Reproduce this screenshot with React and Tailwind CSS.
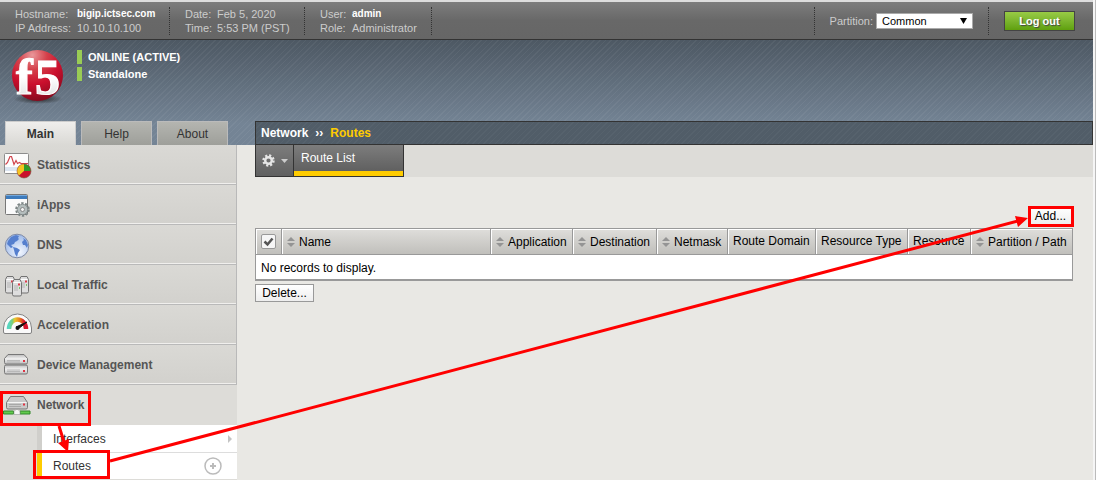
import clsx from 'clsx'

const hostInfo = [
  { width: 'w-[155px]', cols: 'grid-cols-[62px_auto]', rows: [['Hostname:', 'bigip.ictsec.com', true], ['IP Address:', '10.10.10.100']] },
  { width: 'w-[135px]', cols: 'grid-cols-[32px_auto]', rows: [['Date:', 'Feb 5, 2020'], ['Time:', '5:53 PM (PST)']] },
  { width: 'w-[127px]', cols: 'grid-cols-[32px_auto]', rows: [['User:', 'admin', true], ['Role:', 'Administrator']] },
]

const menu = [
  { label: 'Statistics', Icon: StatisticsIcon },
  { label: 'iApps', Icon: AppsIcon },
  { label: 'DNS', Icon: GlobeIcon },
  { label: 'Local Traffic', Icon: TrafficIcon },
  { label: 'Acceleration', Icon: GaugeIcon },
  { label: 'Device Management', Icon: DevicesIcon },
]

const columns = [
  { label: 'Name', sortable: true, width: 'w-[209px]' },
  { label: 'Application', sortable: true, width: 'w-[82px]' },
  { label: 'Destination', sortable: true, width: 'w-[84px]' },
  { label: 'Netmask', sortable: true, width: 'w-[71px]' },
  { label: 'Route Domain', width: 'w-[88px]' },
  { label: 'Resource Type', width: 'w-[92px]' },
  { label: 'Resource', width: 'w-[63px]' },
  { label: 'Partition / Path', sortable: true, width: 'w-[102px]' },
]

function Logo() {
  return (
    <svg width="56" height="60" viewBox="0 0 56 60" aria-label="F5" className="overflow-visible">
      <defs>
        <radialGradient id="ball" cx="0.4" cy="0.1" r="0.95">
          <stop offset="0" stopColor="#e9979a" />
          <stop offset="0.3" stopColor="#d5404a" />
          <stop offset="0.6" stopColor="#cb0f2d" />
          <stop offset="1" stopColor="#7d0a1c" />
        </radialGradient>
        <radialGradient id="ballShadow">
          <stop offset="0" stopColor="#222" stopOpacity="0.9" />
          <stop offset="1" stopColor="#222" stopOpacity="0" />
        </radialGradient>
        <linearGradient id="letters" x1="0" y1="0" x2="0" y2="1">
          <stop offset="0.5" stopColor="#fff" />
          <stop offset="1" stopColor="#d8d8d8" />
        </linearGradient>
      </defs>
      <ellipse cx="28" cy="50" rx="25" ry="5" fill="url(#ballShadow)" />
      <circle cx="27.500" cy="26.500" r="25.500" fill="url(#ball)" />
      <g fontFamily="Liberation Serif, serif" fontWeight="bold" fontSize="50" fill="url(#letters)" stroke="#fff" strokeWidth="1.200">
        <text x="6" y="45">f</text>
        <text x="25" y="45">5</text>
      </g>
    </svg>
  )
}

function StatisticsIcon() {
  return (
    <svg width="32" height="30" viewBox="0 0 32 30">
      <rect x="4.500" y="3.500" width="24" height="20" rx="1" fill="#fdfdfd" stroke="#8d8d8d" />
      <path d="M5 17h23v4H5z" fill="#dbe5f1" />
      <path d="M5.500 14.500l2-2 2.500-6h1.500l2.500 8 2-4 1.500 3 2-1 1.500 1h7" fill="none" stroke="#d0434c" strokeWidth="1.200" />
      <circle cx="24" cy="21" r="7" fill="#c9112b" stroke="#77553a" strokeWidth="0.600" />
      <path d="M24 21v-6.700a6.700 6.700 0 0 0-5 11.200z" fill="#f3c521" />
      <path d="M24 21v-6.700a6.700 6.700 0 0 1 6.700 6.700z" fill="#2f9b2b" />
    </svg>
  )
}

function AppsIcon() {
  return (
    <svg width="32" height="30" viewBox="0 0 32 30">
      <rect x="5.500" y="4.500" width="22" height="20" rx="1" fill="#fafafa" stroke="#777" />
      <path d="M6 5h21v4H6z" fill="#3c7bbd" />
      <path d="M6 5h21v1H6z" fill="#74a8db" />
      <circle cx="22.500" cy="19.500" r="6.300" fill="none" stroke="#7c8585" strokeWidth="2" strokeDasharray="2.400 1.550" />
      <circle cx="22.500" cy="19.500" r="5.200" fill="#b4bdbd" stroke="#7c8585" strokeWidth="0.800" />
      <circle cx="22.500" cy="19.500" r="2" fill="#f2f2f2" stroke="#777" strokeWidth="0.800" />
    </svg>
  )
}

function GlobeIcon() {
  return (
    <svg width="32" height="30" viewBox="0 0 32 30">
      <defs>
        <radialGradient id="sea" cx="0.6" cy="0.75" r="0.8">
          <stop offset="0" stopColor="#f3f7fe" />
          <stop offset="1" stopColor="#96b4e7" />
        </radialGradient>
      </defs>
      <circle cx="17" cy="16" r="11.800" fill="url(#sea)" stroke="#7f8aa5" />
      <path d="M8 11l3-4 5-2 3 1-1 2 1 1-2 2-2 1-1 2-3 1 2 2-2 1-3-3-1-1z" fill="#557fce" />
      <path d="M13 17l4 1 3 2-2 3-1 4-2-3-1-4z" fill="#557fce" />
      <path d="M23 8l3 2 2 5-1 3-2-3-2 0-1-3 2-2z" fill="#557fce" />
    </svg>
  )
}

function Tower({ x, y }) {
  return (
    <g transform={`translate(${x} ${y})`}>
      <path d="M0.500 3.500l1.500-3h6l1.500 3v12q0 1.500-1.500 1.500h-6q-1.500 0-1.500-1.500z" fill="#dedede" stroke="#737373" />
      <path d="M1.500 3.500h7" stroke="#fff" />
      <path d="M2 7h4M2 9h4M2 11h4" stroke="#aaa" strokeWidth="0.800" />
      <path d="M6 4.500h2v2H6z" fill="#dd3b48" />
      <path d="M7 8h1v2H7z" fill="#79c36a" />
    </g>
  )
}

function TrafficIcon() {
  return (
    <svg width="32" height="30" viewBox="0 0 32 30">
      <Tower x={5} y={6} />
      <Tower x={19} y={6} />
      <Tower x={12} y={9} />
    </svg>
  )
}

function GaugeIcon() {
  return (
    <svg width="32" height="30" viewBox="0 0 32 30">
      <defs>
        <linearGradient id="heat">
          <stop offset="0" stopColor="#58d5c0" />
          <stop offset="0.2" stopColor="#7bcf7a" />
          <stop offset="0.35" stopColor="#ecc72d" />
          <stop offset="0.65" stopColor="#e77a1d" />
          <stop offset="0.9" stopColor="#d5132d" />
        </linearGradient>
      </defs>
      <path d="M3.500 18a14 14 0 0 1 28 0v4q0 1.500-1.500 1.500H5q-1.500 0-1.500-1.500z" fill="#fafafa" stroke="#828282" />
      <path d="M9 19a8.500 9.500 0 0 1 17 0" fill="none" stroke="url(#heat)" strokeWidth="4.500" />
      <path d="M16 17l11-5-9 7z" fill="#111" stroke="#111" />
      <circle cx="17.500" cy="18" r="2" fill="#111" />
    </svg>
  )
}

function DevicesIcon() {
  return (
    <svg width="32" height="30" viewBox="0 0 32 30">
      <defs>
        <linearGradient id="metal" x1="0" y1="0" x2="0" y2="1">
          <stop offset="0" stopColor="#bbb" />
          <stop offset="0.45" stopColor="#f0f0f0" />
          <stop offset="1" stopColor="#bdbdbd" />
        </linearGradient>
      </defs>
      <path d="M4.500 8.500l3.500-4h16l3.500 4v4q0 1.500-1.500 1.500h-20q-1.500 0-1.500-1.500z" fill="url(#metal)" stroke="#777" />
      <path d="M4.500 16.500q0-1.500 1.500-1.500h20q1.500 0 1.500 1.500v6q0 1.500-1.500 1.500h-20q-1.500 0-1.500-1.500z" fill="url(#metal)" stroke="#777" />
      <path d="M7 10.500h13M7 12h13M7 20h13M7 21.500h13" stroke="#aaa" strokeWidth="0.700" />
      <path d="M23 10h2v2h-2zM23 20h2v2h-2z" fill="#df3343" />
    </svg>
  )
}

function NetworkIcon() {
  return (
    <svg width="32" height="30" viewBox="0 0 32 30">
      <path d="M6.500 12.500l4-6h13l4 6v5q0 1.500-1.500 1.500H8q-1.500 0-1.500-1.500z" fill="#c9c9c9" stroke="#777" />
      <path d="M7.500 12.500h19" stroke="#f5f5f5" />
      <path d="M9 14.500h12M9 16.500h12" stroke="#999" strokeWidth="0.700" />
      <path d="M23 13.500h2v2h-2z" fill="#df3343" />
      <path d="M3.500 21h10v3h-10zM20 21h10v3H20z" fill="#62cb4d" stroke="#318728" />
      <path d="M14 24.500v-3l2-2h2l2 2v3z" fill="#f5f5f5" stroke="#999" strokeWidth="0.600" />
    </svg>
  )
}

function GearIcon() {
  return (
    <svg width="13" height="13" viewBox="0 0 13 13">
      <circle cx="6.500" cy="6.500" r="5" fill="none" stroke="#e6e6e6" strokeWidth="2.400" strokeDasharray="2.100 1.827" />
      <circle cx="6.500" cy="6.500" r="3.300" fill="none" stroke="#e6e6e6" strokeWidth="2.400" />
    </svg>
  )
}

function SortIcon() {
  return (
    <svg width="8" height="10" viewBox="0 0 8 10" className="shrink-0">
      <path d="M4 0l4 4H0zM4 10l4-4H0z" fill="#949494" />
    </svg>
  )
}

function TopBar() {
  return (
    <div className="flex items-center h-[38px] border-b border-[#333] bg-linear-to-b from-[#7d7d7d] via-[#686868] to-[#666] text-[11px] leading-[14px] text-[#ccc]">
      <div className="flex pl-[15px]">
        {hostInfo.map(({ width, cols, rows }, i) => (
          <dl key={i} className={clsx('grid h-7 border-r border-dotted border-[#333]', width, cols, i > 0 && 'pl-[15px]')}>
            {rows.map(([label, value, strong]) => (
              <div key={label} className="contents">
                <dt>{label}</dt>
                <dd className={clsx('whitespace-nowrap', strong && 'text-[10px] leading-[14px] font-bold text-white')}>{value}</dd>
              </div>
            ))}
          </dl>
        ))}
      </div>
      <div className="flex items-center ml-auto pr-[18px]">
        <div className="flex items-center h-7 px-[15px] gap-[3px] border-x border-dotted border-[#333]">
          <label htmlFor="partition">Partition:</label>
          <div className="relative flex">
            <select id="partition" className="appearance-none w-[97px] h-4 pl-[5px] border border-[#aaa] bg-white text-[11px] leading-[14px] text-black">
              <option>Common</option>
            </select>
            <svg width="7" height="6" viewBox="0 0 7 6" className="absolute right-[6px] top-[5px] pointer-events-none">
              <path d="M0 0h7L3.500 6z" fill="#000" />
            </svg>
          </div>
        </div>
        <button className="ml-[15px] w-[71px] h-5 border border-[#444] bg-linear-to-b from-[#98cb45] to-[#5fa00c] font-bold text-white [text-shadow:1px_1px_1px_#444]">
          Log out
        </button>
      </div>
    </div>
  )
}

function Sidebar() {
  return (
    <nav className="w-[237px] shrink-0 bg-[#dddcd8] text-xs">
      {menu.map(({ label, Icon }) => (
        <a key={label} href="#" className="flex items-center gap-[5px] h-10 border-r border-b border-[#b9b9b9] bg-linear-to-b from-[#dad9d5] to-[#d2d1cd] font-bold text-[#555] shadow-[inset_0_-1px_#f0efed]">
          <Icon />
          {label}
        </a>
      ))}
      <a href="#" className="flex items-center gap-[5px] h-10 font-bold text-[#555]">
        <NetworkIcon />
        Network
      </a>
      <div className="ml-[37px] bg-white text-[#333]">
        <a href="#" className="flex items-center justify-between h-7 pl-[11px] pr-[5px] border-l-5 border-l-[#d0cfcb] border-b border-b-[#ddd]">
          Interfaces
          <svg width="4" height="8" viewBox="0 0 4 8"><path d="M0 0l4 4-4 4z" fill="#c4c4c4" /></svg>
        </a>
        <a href="#" className="flex items-center justify-between h-[26px] pl-[11px] pr-[15px] border-l-5 border-[#fc0]">
          Routes
          <svg width="18" height="18" viewBox="0 0 18 18" fill="none" stroke="#bbb">
            <circle cx="9" cy="9" r="8" strokeWidth="1.500" />
            <path d="M6 9h6M9 6v6" strokeWidth="2" />
          </svg>
        </a>
      </div>
    </nav>
  )
}

function RouteTable() {
  return (
    <table className="w-full table-fixed border-collapse border border-[#999] border-b-2 bg-white">
      <thead>
        <tr className="h-[26px] bg-linear-to-b from-[#dfdedb] to-[#bfbeba]">
          <th className="w-[26px] border border-[#999] p-0 shadow-[inset_1px_1px_#fff]">
            <div className="relative mx-auto size-[15px]">
              <input type="checkbox" defaultChecked aria-label="Select all" className="peer block appearance-none size-[15px] rounded-xs border border-[#999] bg-[#f6f6f6]" />
              <svg width="15" height="15" viewBox="0 0 15 15" className="absolute inset-0 pointer-events-none hidden peer-checked:block">
                <path d="M3.500 7.500l3 3 5-6" fill="none" stroke="#555" strokeWidth="2.500" />
              </svg>
            </div>
          </th>
          {columns.map(({ label, sortable, width }) => (
            <th key={label} className={clsx('border border-[#999] p-0 font-normal text-left whitespace-nowrap shadow-[inset_1px_1px_#fff]', width)}>
              <div className={clsx('flex items-center gap-1 pl-[5px]', !sortable && 'pb-[2px]')}>
                {sortable && <SortIcon />}
                {label}
              </div>
            </th>
          ))}
        </tr>
      </thead>
      <tbody>
        <tr className="h-[25px]">
          <td colSpan={9} className="px-[5px] pt-[2px] pb-0">No records to display.</td>
        </tr>
      </tbody>
    </table>
  )
}

// Callouts for the Network > Routes > Add path
function Callouts() {
  return (
    <svg width="1096" height="480" className="absolute left-0 top-0 pointer-events-none" fill="none" stroke="red" strokeWidth="3">
      <rect x="1.500" y="392.500" width="88" height="32" />
      <rect x="34.500" y="451.500" width="74" height="26" />
      <rect x="1029.500" y="207.500" width="43" height="18" />
      <path d="M59 426l5 16M110 461L1018 221" />
      <path d="M68 452l-10-9 11-4zM1028 218l-10 9-3-11z" fill="red" stroke="none" />
    </svg>
  )
}

export default function App() {
  return (
    <div className="relative min-h-screen overflow-hidden bg-[#e9e8e4] font-['Liberation_Sans',Arial,sans-serif] text-xs text-black">
      <div className="min-h-screen flex flex-col mr-[3px]">
        <header className="border-t-2 border-[#ddd]">
          <TopBar />
          <div className="flex flex-col justify-between h-[105px] bg-[repeating-linear-gradient(135deg,#ffffff0c_0_1px,transparent_1px_4px),linear-gradient(#4d5863,#748495_80%)]">
            <div className="flex gap-[11px] pl-[10px] pt-[9px]">
              <Logo />
              <div className="flex flex-col gap-[3px] pt-[1px] text-[11px] leading-[14px] font-bold text-white">
                <span className="pl-[6px] border-l-5 border-[#9c5]">ONLINE (ACTIVE)</span>
                <span className="pl-[6px] border-l-5 border-[#9c5]">Standalone</span>
              </div>
            </div>
            <div className="flex">
              <div className="flex w-[255px] shrink-0 gap-[5px] pl-[5px]">
                <button className="w-[71px] h-6 border border-b-0 border-[#ccc] bg-linear-to-b from-[#efeeec] to-[#dad9d5] font-bold text-[#333]">Main</button>
                <button className="w-[71px] h-6 border border-b-0 border-[#bbb] bg-linear-to-b from-[#b4b5b0] to-[#9e9f9a] text-[#333]">Help</button>
                <button className="w-[71px] h-6 border border-b-0 border-[#bbb] bg-linear-to-b from-[#b4b5b0] to-[#9e9f9a] text-[#333]">About</button>
              </div>
              <div className="flex grow items-center gap-[7px] h-6 pl-[5px] border border-[#333] bg-[repeating-linear-gradient(135deg,#ffffff08_0_1px,transparent_1px_4px)] bg-[#515d68] font-bold text-white">
                Network <span>››</span> <span className="text-[#fc0]">Routes</span>
              </div>
            </div>
          </div>
        </header>
        <div className="flex grow">
          <Sidebar />
          <main className="grow pl-[18px]">
            <div className="flex h-8 bg-[#dddcd8]">
              <button aria-label="Settings" className="flex items-center justify-center gap-[6px] w-[39px] border border-t-0 border-[#333] bg-linear-to-b from-[#7d7d7d] to-[#606060]">
                <GearIcon />
                <svg width="7" height="4" viewBox="0 0 7 4"><path d="M0 0h7L3.500 4z" fill="#ccc" /></svg>
              </button>
              <div className="flex w-[110px] border-r border-b border-[#333]">
                <a href="#" className="grow pl-[7px] pt-[5px] border-b-5 border-[#fc0] bg-linear-to-b from-[#7d7d7d] to-[#606060] leading-4 text-white">Route List</a>
              </div>
            </div>
            <div className="pr-5 pt-[29px]">
              <div className="flex justify-end pb-[3px]">
                <button className="w-[45px] h-[19px] border border-[#999] bg-linear-to-b from-white to-[#eee]">Add...</button>
              </div>
              <RouteTable />
              <button className="w-[59px] h-[18px] mt-[3px] border border-[#999] bg-linear-to-b from-white to-[#eee]">Delete...</button>
            </div>
          </main>
        </div>
      </div>
      <div className="absolute inset-y-0 right-0 w-[3px] border-r border-[#bbb] bg-[#f5f5f5]" />
      <Callouts />
    </div>
  )
}
